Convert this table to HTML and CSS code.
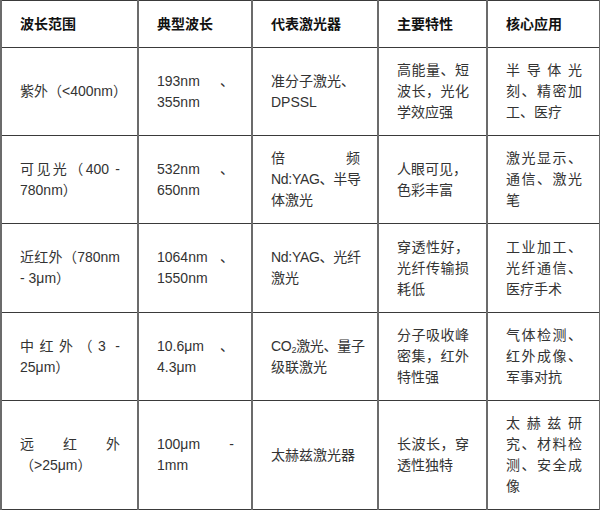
FILE: index.html
```html
<!DOCTYPE html>
<html lang="zh-CN">
<head>
<meta charset="utf-8">
<title>激光波长表</title>
<link rel="stylesheet" href="styles.css">
</head>
<body>
<table class="laser-table">
  <colgroup>
    <col class="c1"><col class="c2"><col class="c3"><col class="c4"><col class="c5">
  </colgroup>
  <thead>
    <tr class="head">
      <th>波长范围</th><th>典型波长</th><th>代表激光器</th><th>主要特性</th><th>核心应用</th>
    </tr>
  </thead>
  <tbody>
    <tr class="r1">
      <td><span class="l">紫外（&lt;400nm）</span></td>
      <td><span class="j">193nm 、</span><span class="l">355nm</span></td>
      <td><span class="l">准分子激光、</span><span class="l">DPSSL</span></td>
      <td><span class="j">高能量、短</span><span class="j">波长，光化</span><span class="l">学效应强</span></td>
      <td><span class="j">半导体光</span><span class="j">刻、精密加</span><span class="l">工、医疗</span></td>
    </tr>
    <tr class="r2">
      <td><span class="j">可见光（400 -</span><span class="l">780nm）</span></td>
      <td><span class="j">532nm 、</span><span class="l">650nm</span></td>
      <td><span class="j">倍频</span><span class="j tight">Nd:YAG、半导</span><span class="l">体激光</span></td>
      <td><span class="l">人眼可见，</span><span class="l">色彩丰富</span></td>
      <td><span class="j">激光显示、</span><span class="j">通信、激光</span><span class="l">笔</span></td>
    </tr>
    <tr class="r3">
      <td><span class="j">近红外（780nm</span><span class="l">- 3μm）</span></td>
      <td><span class="j">1064nm 、</span><span class="l">1550nm</span></td>
      <td><span class="l tight">Nd:YAG、光纤</span><span class="l">激光</span></td>
      <td><span class="j">穿透性好，</span><span class="j">光纤传输损</span><span class="l">耗低</span></td>
      <td><span class="j">工业加工、</span><span class="j">光纤通信、</span><span class="l">医疗手术</span></td>
    </tr>
    <tr class="r4">
      <td><span class="j">中红外（3 -</span><span class="l">25μm）</span></td>
      <td><span class="j">10.6μm 、</span><span class="l">4.3μm</span></td>
      <td><span class="l tight">CO<sub>2</sub>激光、量子</span><span class="l">级联激光</span></td>
      <td><span class="j">分子吸收峰</span><span class="j">密集，红外</span><span class="l">特性强</span></td>
      <td><span class="j">气体检测、</span><span class="j">红外成像、</span><span class="l">军事对抗</span></td>
    </tr>
    <tr class="r5">
      <td><span class="j">远红外</span><span class="l">（&gt;25μm）</span></td>
      <td><span class="j">100μm -</span><span class="l">1mm</span></td>
      <td><span class="l">太赫兹激光器</span></td>
      <td><span class="j">长波长，穿</span><span class="l">透性独特</span></td>
      <td><span class="j">太赫兹研</span><span class="j">究、材料检</span><span class="j">测、安全成</span><span class="l">像</span></td>
    </tr>
  </tbody>
</table>
</body>
</html>
```
FILE: styles.css
```css
html, body {
  margin: 0;
  padding: 0;
  background: #ffffff;
}
body {
  font-family: "Liberation Sans", "Noto Sans CJK SC", sans-serif;
  font-size: 14px;
  color: #333333;
}
.laser-table {
  border-collapse: collapse;
  table-layout: fixed;
  width: 599px;
  margin: 0;
}
.c1 { width: 137px; }
.c2 { width: 114px; }
.c3 { width: 126px; }
.c4 { width: 109px; }
.c5 { width: 113px; }
.laser-table th,
.laser-table td {
  border-left: 2px solid #6b6b6b;
  border-right: 2px solid #6b6b6b;
  border-top: 1px solid #3a3a3a;
  border-bottom: 1px solid #3a3a3a;
  padding: 0 17px 0 18px;
  vertical-align: middle;
  text-align: left;
  line-height: 21px;
}
.laser-table th {
  font-weight: bold;
  color: #111111;
}
.head { height: 47px; }
.r1 { height: 88px; }
.r2 { height: 88px; }
.r3 { height: 89px; }
.r4 { height: 88px; }
.r5 { height: 109px; }
.l,
.j {
  display: block;
  white-space: nowrap;
  height: 21px;
}
.j {
  text-align: justify;
  text-align-last: justify;
}
.tight {
  letter-spacing: -0.3px;
}
sub {
  font-size: 9px;
  line-height: 0;
  vertical-align: -2px;
}
```
